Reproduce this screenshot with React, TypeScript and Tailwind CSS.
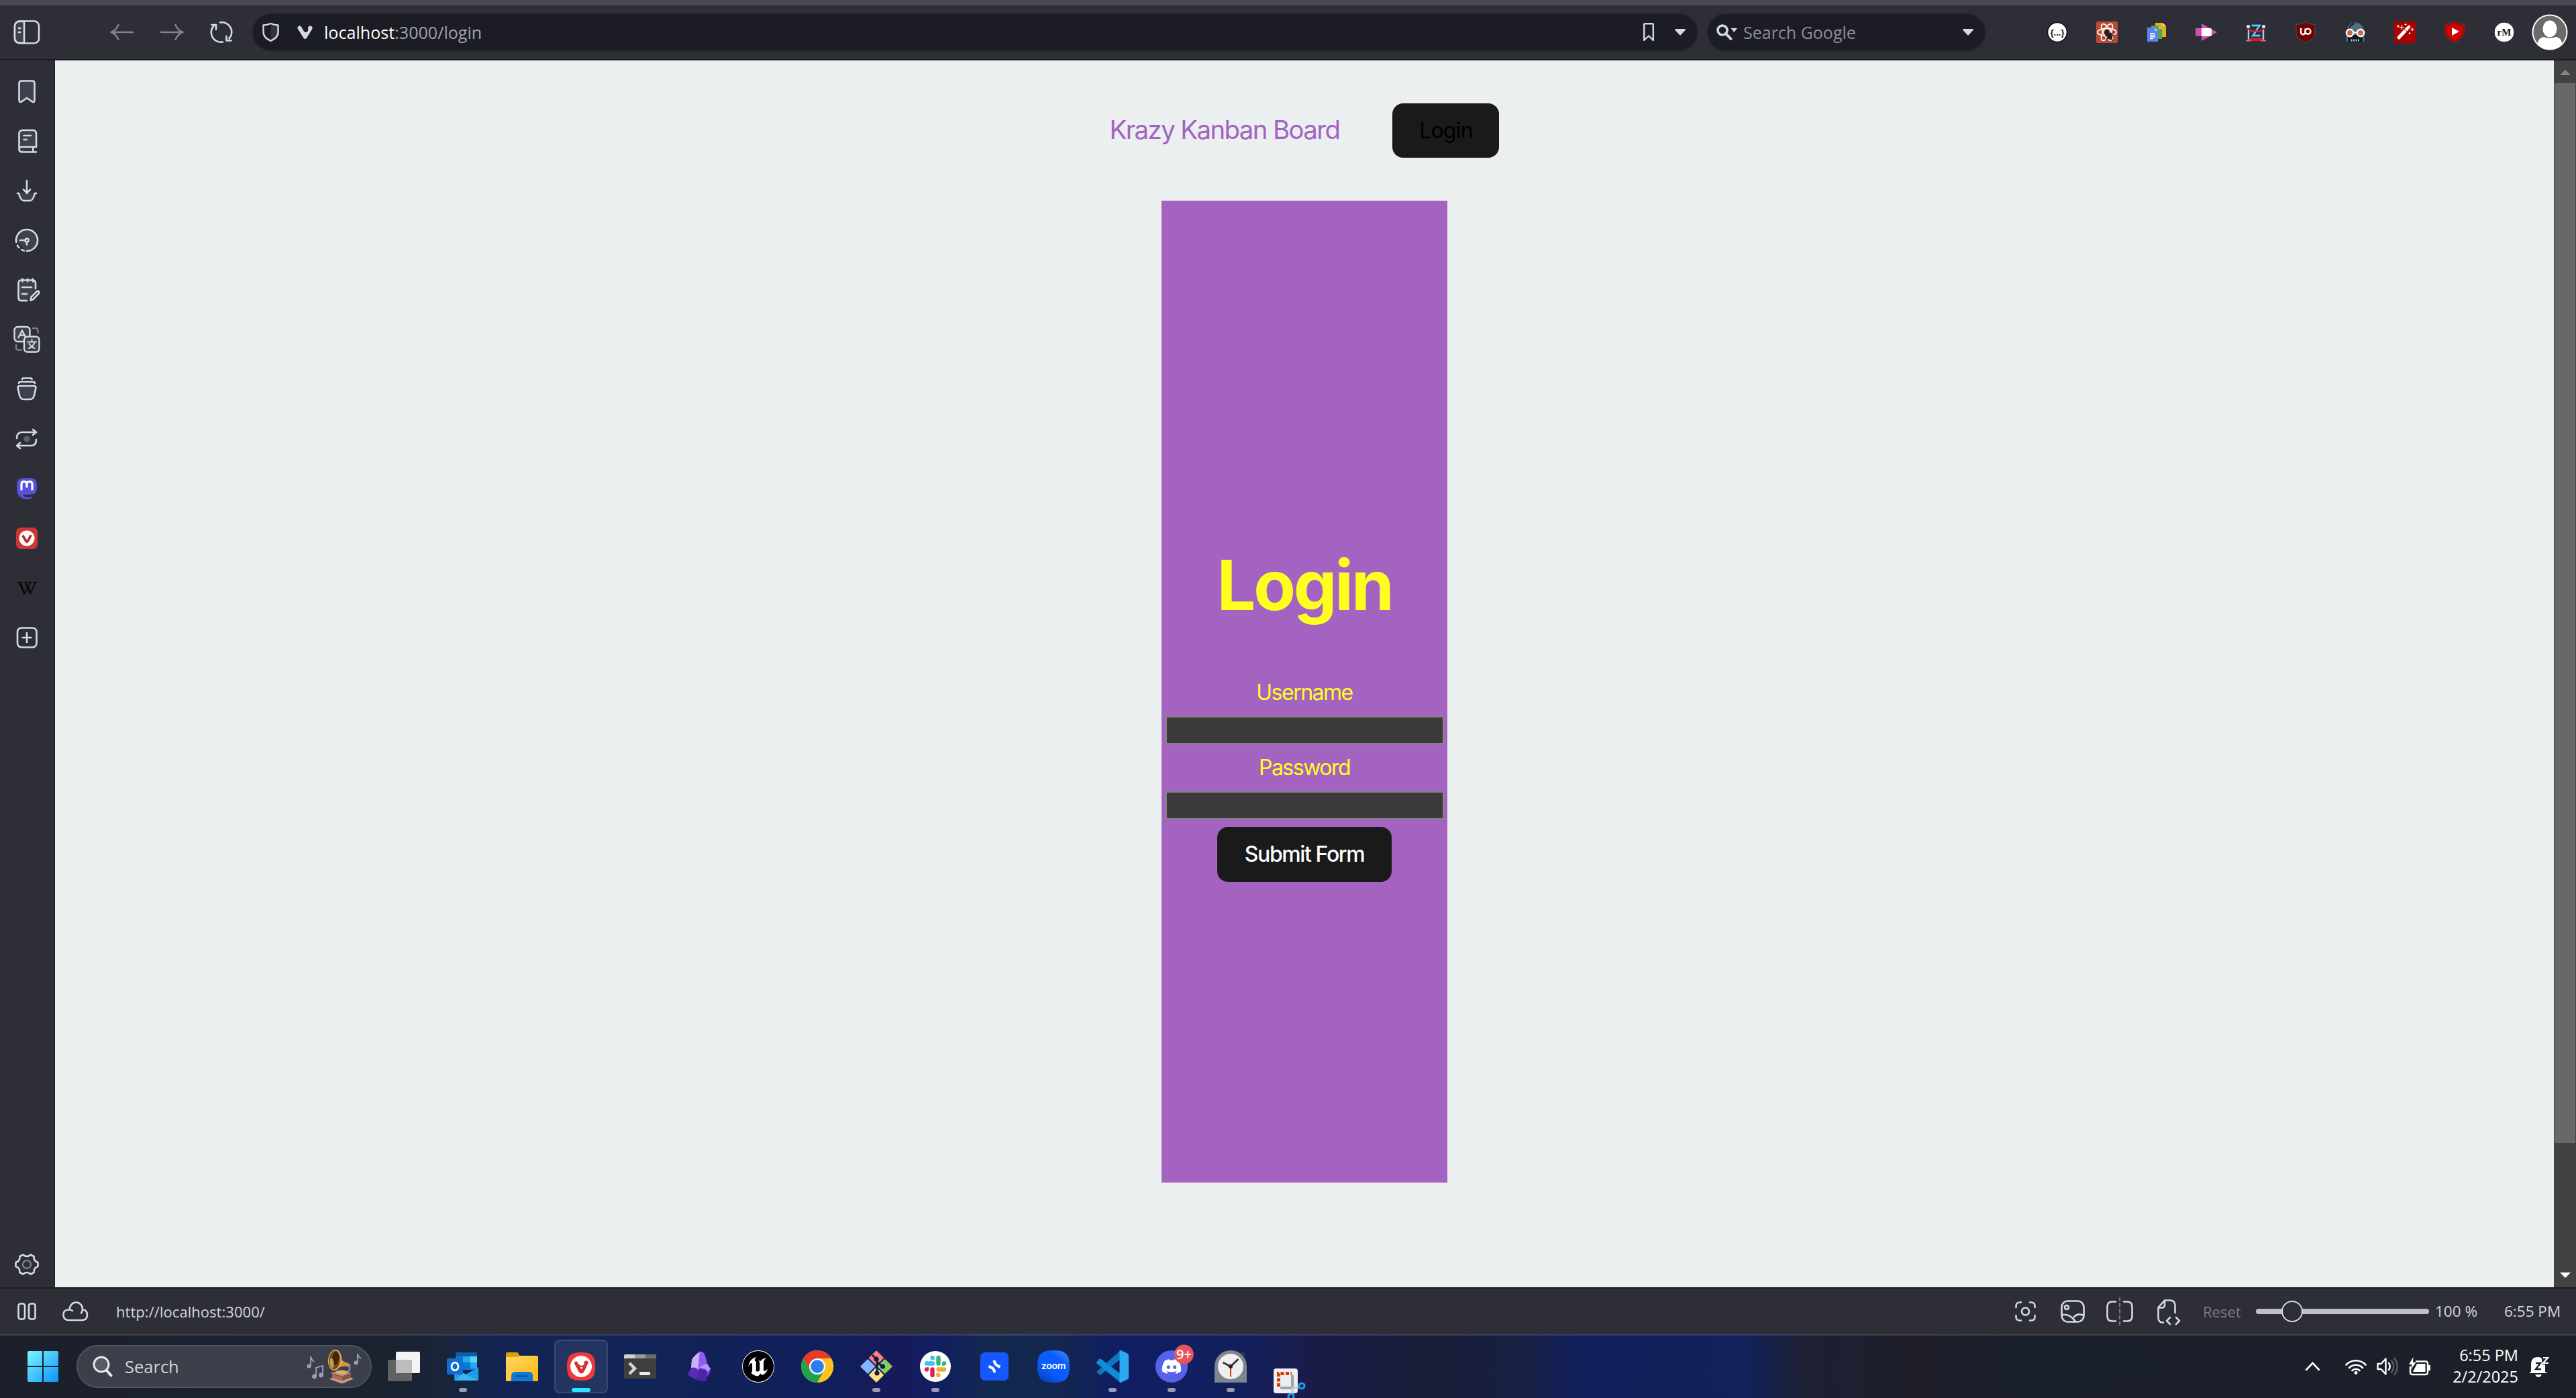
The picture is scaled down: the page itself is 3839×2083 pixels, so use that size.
import type { ReactNode } from "react";
import { FaDiscord, FaWikipediaW } from "react-icons/fa";
import { SiUnrealengine } from "react-icons/si";

const INK = "#d5d9e6";

type IconProps = { w: number; h: number; children: ReactNode; className?: string; stroke?: string; sw?: number };

function Icon({ w, h, children, className = "", stroke = INK, sw = 2.6 }: IconProps) {
  return (
    <svg
      width={w}
      height={h}
      viewBox={`0 0 ${w} ${h}`}
      fill="none"
      stroke={stroke}
      strokeWidth={sw}
      strokeLinecap="round"
      strokeLinejoin="round"
      className={`block shrink-0 overflow-visible ${className}`}
    >
      {children}
    </svg>
  );
}

function VivaldiMark({ w }: { w: number }) {
  return (
    <svg width={w} height={w} viewBox="0 0 48 48" className="block">
      <path d="M24 3C40 3 45 8 45 24S40 45 24 45 3 40 3 24 8 3 24 3Z" fill="#ef3939" />
      <circle cx="24" cy="24" r="16" fill="#fff" />
      <path d="M16.5 19 L23 31 Q24.5 33 26 31 Q29 26 31.5 19" fill="none" stroke="#d83236" strokeWidth="5" strokeLinecap="round" strokeLinejoin="round" />
      <circle cx="31.5" cy="18.5" r="3" fill="#d83236" />
      <path d="M20.5 22 Q24 26 28 22.5" fill="none" stroke="#d83236" strokeWidth="2" />
    </svg>
  );
}

/* ---------- toolbar ---------- */

function Extensions() {
  const items: ReactNode[] = [
    <>
      <circle cx="16" cy="16" r="14.5" fill="#fff" stroke="#111" strokeWidth="1.6" />
      <text x="16" y="20.5" textAnchor="middle" fontSize="13" fontWeight="700" fontFamily="Liberation Sans, sans-serif" fill="#111">{"{...}"}</text>
    </>,
    <>
      <rect width="32" height="32" rx="2" fill="#bb4a35" />
      <g fill="none" stroke="#fff" strokeWidth="1.7">
        <ellipse cx="16" cy="16" rx="14" ry="5.6" />
        <ellipse cx="16" cy="16" rx="14" ry="5.6" transform="rotate(60 16 16)" />
        <ellipse cx="16" cy="16" rx="14" ry="5.6" transform="rotate(120 16 16)" />
      </g>
      <circle cx="16" cy="16" r="3.4" fill="#24201f" />
      <ellipse cx="20" cy="22" rx="4.2" ry="5" fill="#24201f" transform="rotate(-30 20 22)" />
      <path d="M13 21l5 1M15 27l4-3M21 17l3 2M24 20l3 1M23 25l1 4M12 17l4 3" stroke="#24201f" strokeWidth="1.6" />
    </>,
    <>
      <path d="M14 2h11l5 5v16H14z" fill="#e2b219" /><path d="M25 2l5 5h-5z" fill="#f4dc83" />
      <path d="M8 6h11l5 5v15H8z" fill="#56a05a" /><path d="M19 6l5 5h-5z" fill="#a4d0a2" />
      <path d="M2 9h11l5 5v16H2z" fill="#5b82ee" /><path d="M13 9l5 5h-5z" fill="#a9c1fa" />
      <path d="M6 18h8M6 20.500h8M6 23h8M6 25.500h5" stroke="#fff" strokeWidth="1.300" />
    </>,
    <>
      <path d="M0 10h9V3l23 13L9 29v-7H0z" fill="#cb52ac" />
      <path d="M9 10h13a2 2 0 012 2v1.500l-4 2.500 4 2.500V20a2 2 0 01-2 2H9z" fill="#fff" />
      <path d="M19 15l5-4v10l-5-4z" fill="#fff" />
    </>,
    <>
      <path d="M9.500 6h12L11.500 21h11" fill="none" stroke="#14202b" strokeWidth="5.500" />
      <path d="M9.500 6h12L11.500 21h11" fill="none" stroke="#6fb9f5" strokeWidth="3" />
      <path d="M5 27V9M27 27V9" stroke="#9fd4dc" strokeWidth="2.400" />
      <circle cx="4.500" cy="7.500" r="2.500" fill="#e9f1f4" /><circle cx="27.500" cy="7.500" r="2.500" fill="#e9f1f4" />
      <path d="M4 10Q9 17 16 14Q23 17 28 10" fill="none" stroke="#c62c3e" strokeWidth="2.200" />
      <path d="M8 24h16l3 5H5z" fill="#c21f30" /><path d="M1 28.500h8M23 28.500h8" stroke="#e36a72" strokeWidth="2" />
    </>,
    <>
      <path d="M16 .5C13 4 7 4 2 4.500V18c0 6 8 10 14 13.500C22 28 30 24 30 18V4.500C25 4 19 4 16 .5Z" fill="#720000" stroke="#4e4e55" strokeWidth="1" />
      <path d="M9 10v6a3.300 3.300 0 006.600 0v-5.500" fill="none" stroke="#fff" strokeWidth="2.400" />
      <circle cx="19.500" cy="14.800" r="3.900" fill="none" stroke="#fff" strokeWidth="2.400" />
    </>,
    <>
      <path d="M4 13C4 6 9 1.500 16 1.500S28 6 28 13v17h-3l-2-5H9l-2 5H4z" fill="#4f6f80" />
      <path d="M7 12C7 7 11 4 15 3" stroke="#16242e" strokeWidth="2" fill="none" />
      <path d="M5 20h22v10H5z" fill="#0e1a22" />
      <path d="M3.500 22v8M28.500 22v8" stroke="#4f7a8c" strokeWidth="1.600" />
      <circle cx="8" cy="17" r="5.200" fill="#c66a47" stroke="#fff" strokeWidth="2.400" />
      <circle cx="24" cy="17" r="5.200" fill="#c66a47" stroke="#fff" strokeWidth="2.400" />
      <path d="M13 16.500h6" stroke="#fff" strokeWidth="2.200" />
      <path d="M10.500 26.500v3M14 26.500v3M17.500 26.500v3M21 26.500v3" stroke="#b9dbe6" strokeWidth="1.800" />
    </>,
    <>
      <rect width="32" height="32" rx="1.500" fill="#ab0000" />
      <path d="M7 24L18.500 11.500" stroke="#fff" strokeWidth="5" strokeLinecap="round" />
      <path d="M15 11l5 4.500" stroke="#ab0000" strokeWidth="1" /><path d="M20.500 9.500l1.500-1.500" stroke="#fff" strokeWidth="4.500" strokeLinecap="round" />
      <path d="M11.500 5v7M8 8.500h7M6 5v4M4 7h4M17 3v3M15.500 4.500h3M27 9v5M24.500 11.500h5M23 16v3M21.500 17.500h3" stroke="#fff" strokeWidth="1.200" />
    </>,
    <>
      <path d="M16 .8C11 3 5 3 .8 5.500V14c0 8 8 13 15.200 17.200C23 27 31.200 22 31.200 14V5.500C27 3 21 3 16 .8Z" fill="none" stroke="#d80000" strokeWidth="1.300" />
      <path d="M16 3C11.500 5 7 5 3 7v7c0 7 7 11 13 15 6-4 13-8 13-15V7c-4-2-8.500-2-13-4Z" fill="#d80000" />
      <path d="M12 9l11 6-11 6z" fill="#fff" />
    </>,
    <>
      <circle cx="16" cy="16" r="15" fill="#fff" stroke="#1a1a1d" strokeWidth="1" />
      <text x="16" y="21" textAnchor="middle" fontSize="15" fontWeight="700" fontFamily="Liberation Serif, serif" fill="#111">rM</text>
    </>,
  ];
  return (
    <div className="ml-[69px] flex">
      {items.map((it, i) => (
        <div key={i} className="flex w-[74px] justify-center">
          <svg width="32" height="32" viewBox="0 0 32 32" className="block">{it}</svg>
        </div>
      ))}
    </div>
  );
}

function Toolbar() {
  return (
    <header className="flex h-[90px] shrink-0 items-center border-t-8 border-b-2 border-t-[#4a4a52] border-b-[#1c1c25] bg-[#2e2e37] pl-5">
      <Icon w={40} h={36}>
        <rect x="2" y="1.500" width="36" height="33" rx="7" fill="#2e2e37" />
        <path d="M16 2v32H9a7 7 0 01-7-7V9a7 7 0 017-7z" fill="#3f424c" />
        <path d="M8 12h2M8 18h2" />
      </Icon>
      <Icon w={35} h={24} className="ml-[104px]" stroke="#82838f" sw={2.4}>
        <path d="M34 12H1.500M12.500 1C10 7 6 10.500 1.500 12 6 13.500 10 17 12.500 23" />
      </Icon>
      <Icon w={35} h={24} className="ml-10" stroke="#82838f" sw={2.4}>
        <path d="M1 12H33.500M22.500 1C25 7 29 10.500 33.500 12 29 13.500 25 17 22.500 23" />
      </Icon>
      <Icon w={32} h={32} className="ml-10">
        <path d="M14 1.500A14.500 14.500 0 0127.500 25.500M18 30.500A14.500 14.500 0 014.500 6.500" />
        <path d="M1.500 5H8v7M30.500 28.500H23.500V22" />
      </Icon>
      <div className="ml-[29px] flex h-[58px] w-[2156px] items-center rounded-[29px] border-2 border-[#282831] bg-[#1c1c25] pl-[14px] pr-[17px]">
        <Icon w={25} h={28} sw={2.4}>
          <path d="M12.500 1v26c7.500-4 11-7 11-14V3.500Z" fill="#33333c" stroke="none" />
          <path d="M1.500 3.500C6 3.500 9 2.500 12.500 1c3.500 1.500 6.500 2.500 11 2.500V13c0 7-3.500 10-11 14C5 23 1.500 20 1.500 13Z" />
        </Icon>
        <svg width="23" height="20" viewBox="0 0 23 20" className="ml-[27px] block" fill={INK}>
          <path d="M.6 4.500A3 3 0 016 2l3.500 6q2 3.300 5 1.500 2.300-1.600 1.700-4.500A3.300 3.300 0 1122.500 4.800L14 18.500q-2.300 3-4.700 0z" />
        </svg>
        <div className="ml-[17px] font-['Open_Sans',sans-serif] text-[25px] leading-[36px] tracking-[0.05px] text-[#a2a3ae]">
          <span className="text-white">localhost</span>:3000/login
        </div>
        <Icon w={16} h={28} className="ml-auto" sw={2.4}>
          <path d="M1.200 2.500Q1.200 1.200 2.500 1.200h11Q14.800 1.200 14.800 2.500V26L8 19.500 1.200 26z" />
        </Icon>
        <svg width="16" height="10" viewBox="0 0 16 10" className="ml-[31px] block" fill={INK}><path d="M1 0h14q1.500 1 .5 2L8 10 .5 2Q-.5 1 1 0z" /></svg>
      </div>
      <div className="ml-3 flex h-[58px] w-[417px] items-center rounded-[29px] border-2 border-[#282831] bg-[#1c1c25] pl-[13px] pr-[17px]">
        <svg width="31" height="24" viewBox="0 0 31 24" className="block" fill="none">
          <circle cx="9" cy="9" r="7" stroke={INK} strokeWidth="3.600" />
          <path d="M14 14l7.500 8" stroke={INK} strokeWidth="4" strokeLinecap="round" />
          <path d="M21.500 6H31l-4.700 6z" fill={INK} />
        </svg>
        <div className="ml-[9px] font-['Open_Sans',sans-serif] text-[25px] leading-[36px] text-[#8e8f9a]">Search Google</div>
        <svg width="16" height="10" viewBox="0 0 16 10" className="ml-auto block" fill={INK}><path d="M1 0h14q1.500 1 .5 2L8 10 .5 2Q-.5 1 1 0z" /></svg>
      </div>
      <Extensions />
      <svg width="54" height="54" viewBox="0 0 54 54" className="ml-1 block">
        <defs><clipPath id="avatar"><circle cx="27" cy="27" r="26" /></clipPath></defs>
        <circle cx="27" cy="27" r="25.500" fill="#6b6b6b" />
        <g clipPath="url(#avatar)" fill="#fff"><ellipse cx="27" cy="22" rx="10.500" ry="12.500" /><path d="M9 54V42q2-7 9-8 9 4 18 0 7 1 9 8v12z" /></g>
        <circle cx="27" cy="27" r="25.500" fill="none" stroke="#fff" strokeWidth="2" />
      </svg>
    </header>
  );
}

/* ---------- left panel ---------- */

const PANEL_ICONS: ReactNode[] = [
  <Icon w={40} h={40}><path d="M8.500 8Q8.500 4.500 12 4.500H28Q31.500 4.500 31.500 8V33Q31.500 37.500 28 35.500L20 30 12 35.500Q8.500 37.500 8.500 33Z" fill="#3f424c" /></Icon>,
  <Icon w={40} h={40}><path d="M8.500 31V9.500Q8.500 4 14 4H29Q34 4 34 9.500V29H12.500Q8.500 29 8.500 32.500T12.500 36.500H34M30.500 29q-3 4 0 7.500" fill="#3f424c" /><path d="M15.500 12H26M15.500 18H20" /></Icon>,
  <Icon w={40} h={40}><path d="M7 24h26l-3 8q-1 3-4 3H14q-3 0-4-3z" fill="#3f424c" stroke="none" /><path d="M6 24h2q3 11 7 11h10q4 0 7-11h2M20 5v19M15 18.500l5 5 5-5" /></Icon>,
  <Icon w={40} h={40}><path d="M4 20a16 16 0 1116 16" fill="#3f424c" /><path d="M16 35.500A16 16 0 014 20" strokeDasharray="4 5" /><path d="M10 20h8M20 24v2.500" /><circle cx="20" cy="20" r="2.500" /></Icon>,
  <Icon w={40} h={40}><path d="M20 36H12Q7.500 36 7.500 31V10Q7.500 5.500 12 5.500H28Q33 5.500 33 10V18" fill="#3f424c" /><path d="M13.500 3.500v4M21 3.500v4M29 3.500v4M13 16H27M13 26h7" /><path d="M25.500 35.500l1-5 8.500-8.500q2-1 3 .5t-.5 3l-8 8.500z" fill="#2e2e37" /></Icon>,
  <Icon w={40} h={40} sw={2.4}><path d="M29 3h4q3.500 0 3.500 4v3M4 28v4q0 3.500 4 3.500h4" stroke="#777985" /><rect x="1.500" y="1" width="23" height="22" rx="5" fill="#3f424c" /><path d="M7.500 17L13 6.500 18.500 17M9.500 13.500h7" /><rect x="16" y="15.500" width="22.500" height="23" rx="5" fill="#3f424c" /><path d="M21 23.500H34M27.500 20v3.500M23 33q7-3 8.500-9M23.500 26q3 5 8 7" strokeWidth="2" /></Icon>,
  <Icon w={40} h={40}><path d="M13 5q0-1.500 2-1.500H25.500q2 0 2 1.500M8 11q0-2 3-2H29q3 0 3 2" /><path d="M6.500 17.500q0-2.500 3-2.500h21q3 0 3 2.500L31 29q-1.500 6-6 6H15q-4.500 0-6-6z" fill="#3f424c" /></Icon>,
  <Icon w={40} h={40}><path d="M5 19q0-9 8-9H33M29 6l5 4-5 4M34 21q0 9-8 9H5M10 26l-5 4 5 4" /><circle cx="20" cy="20" r="4.500" fill="#5d606c" stroke="none" /></Icon>,
  <svg width="30" height="32" viewBox="0 0 30 32" className="block">
    <path d="M7 .8Q15-.6 23 .8q6.500 1.200 6.800 7.500.4 6-.6 11-1 4.500-6.200 5.300-7 1.200-13.500.2 0 3.500 5 4 4 .4 7.500-.7v2.500q-5 1.800-10.500.8Q1.500 29.500.5 19-.3 12 .3 7.500 1.200 2 7 .8z" fill="#5a50e0" />
    <path d="M7 18.500V9.500q0-3.800 4-3.800t4 4.300v4.500-4.500q0-4.300 4-4.300t4 3.800v9" fill="none" stroke="#fff" strokeWidth="3.200" />
  </svg>,
  <div className="size-8 overflow-hidden rounded-[7px] bg-[#cf3535]"><svg width="32" height="32" viewBox="0 0 32 32"><circle cx="16" cy="16" r="11.500" fill="#fff" /><path d="M10.500 13l4.500 7.500q1 1.500 2 0Q20 16 21.500 12.500" fill="none" stroke="#b92b2f" strokeWidth="3.600" strokeLinecap="round" /></svg></div>,
  <FaWikipediaW size={29} color="#08080a" stroke="#08080a" strokeWidth={12} />,
  <Icon w={40} h={40}><rect x="6" y="5.500" width="28.500" height="29" rx="6" fill="#2b2e37" /><path d="M20 13v14M13.500 20h13" /></Icon>,
];

function Panel() {
  return (
    <aside className="flex w-[82px] shrink-0 flex-col border-r-2 border-[#24242d] bg-[#2e2e37] pt-[9px]">
      {PANEL_ICONS.map((ic, i) => (
        <div key={i} className="flex h-[74px] w-20 items-center justify-center">{ic}</div>
      ))}
      <div className="mt-auto flex h-[68px] w-20 items-center justify-center">
        <Icon w={36} h={32}>
          <path d="M12.500 1.500Q15 4 18 4T23.500 1.500L28.500 4Q28 11 34.500 13V19Q28 21 28.500 28L23.500 30.500Q21 28 18 28T12.500 30.500L7.500 28Q8 21 1.500 19V13Q8 11 7.500 4Z" />
          <circle cx="18" cy="16" r="6" stroke="#777985" />
        </Icon>
      </div>
    </aside>
  );
}

/* ---------- web page ---------- */

function Field({ label, className }: { label: string; className: string }) {
  return (
    <>
      <label className={`h-12 text-[32px] leading-[48px] tracking-[-1.5px] text-[#ffff1f] ${className}`}>{label}</label>
      <input className="mt-[11px] block h-[42px] w-[415px] rounded-[3px] border-2 border-[#858585] bg-[#3b3b3b]" />
    </>
  );
}

function Page() {
  return (
    <main className="flex grow flex-col items-center bg-[#ebeff0] pt-16 font-[Inter,sans-serif]">
      <nav className="flex items-center gap-[79px]">
        <h2 className="pb-[3px] text-[38.4px] leading-[48px] tracking-[-1.6px] text-[#a463c1]">Krazy Kanban Board</h2>
        <button className="h-[81px] w-[159px] rounded-2xl bg-[#1a1a1a] text-[32px] tracking-[-0.8px] text-black">Login</button>
      </nav>
      <form className="mt-16 flex h-[1463px] w-[426px] flex-col items-center bg-[#a463c1] pt-[517px]">
        <h1 className="h-[113px] text-[102.4px] leading-[113px] font-bold tracking-[-3.200px] text-[#ffff1f]">Login</h1>
        <Field label="Username" className="mt-[79px]" />
        <Field label="Password" className="mt-[11px]" />
        <button className="mt-[11px] h-[82px] w-[260px] rounded-2xl bg-[#1a1a1a] text-[32px] font-medium tracking-[-1.4px] text-white">Submit Form</button>
      </form>
    </main>
  );
}

function Scrollbar() {
  return (
    <div className="flex w-[33px] shrink-0 flex-col items-center bg-[#424242]">
      <svg width="16" height="8" viewBox="0 0 16 8" className="mt-[14px] block" fill="#868686"><path d="M8 0l8 8H0z" /></svg>
      <div className="mt-3 h-[1579px] w-[31px] bg-[#686868]" />
      <svg width="16" height="8" viewBox="0 0 16 8" className="mt-auto mb-[14px] block" fill="#fff"><path d="M0 0h16L8 8z" /></svg>
    </div>
  );
}

/* ---------- status bar ---------- */

function StatusBar() {
  return (
    <footer className="flex h-[70px] shrink-0 items-center border-t-2 border-[#1c1c25] bg-[#2e2e37] pl-[26px] font-['Open_Sans',sans-serif] text-[22px] leading-[32px] text-[#d2d5e2]">
      <Icon w={28} h={26}>
        <rect x="1.500" y="1.500" width="9.500" height="23" rx="3" /><rect x="17" y="1.500" width="9.500" height="23" rx="3" />
      </Icon>
      <Icon w={38} h={30} className="ml-[39px]">
        <path d="M10.500 12.500C11 6 15 1.500 20.500 1.500S30 6 30 12c5 1 7 4 7 8q0 8-8 8H9.500Q1.500 28 1.500 20t9-7.500q2.500 0 4.500 1.500M30 12q0 3-2 5.500" />
      </Icon>
      <div className="ml-[42px] tracking-[0.05px]">http://localhost:3000/</div>
      <div className="ml-auto flex items-center">
        <Icon w={31} h={30}>
          <path d="M1.500 9V7Q1.500 1.500 7 1.500H9M22 1.500h2q5.500 0 5.500 5.500V9M29.500 21v2q0 5.500-5.500 5.500H22M9 28.500H7Q1.500 28.500 1.500 23V21" /><circle cx="15.500" cy="15" r="5.500" />
        </Icon>
        <Icon w={36} h={34} className="ml-[37px]">
          <rect x="1.500" y="1.500" width="33" height="31" rx="9" /><circle cx="9" cy="11" r="3" /><path d="M2 22q12-2 20 10M20 25q6-6 14-2" />
        </Icon>
        <Icon w={40} h={42} className="ml-8">
          <path d="M14 6.500H9Q1.500 6.500 1.500 14V28Q1.500 35.500 9 35.500h5M26 6.500h5Q38.500 6.500 38.500 14V28Q38.500 35.500 31 35.500H26" /><path d="M20 1v4M20 9v5M20 18v5M20 27v5M20 37v4" stroke="#777985" strokeWidth="2.200" />
        </Icon>
        <Icon w={34} h={37} className="ml-9">
          <path d="M9 34.500H8Q1.500 34.500 1.500 27V12L11 1.500h8q7.500 0 7.500 8V20M1.500 12.500H7Q11 12.500 11 8V1.500M19 27l-5 5 5 5M28 27l5 5-5 5" />
        </Icon>
        <div className="ml-[34px] w-[79px] text-[#797a85]">Reset</div>
        <div className="relative flex h-8 w-[258px] items-center">
          <div className="h-2 w-full rounded-full bg-[#bfc0cf]" />
          <div className="absolute left-[38px] size-8 rounded-full border-2 border-[#d5d9e6] bg-[#2e2e37]" />
        </div>
        <div className="ml-[9px] w-[103px] text-[22.5px]">100 %</div>
        <div className="w-[107px] text-[22.5px]">6:55 PM</div>
      </div>
    </footer>
  );
}

/* ---------- taskbar ---------- */

type App = { art: ReactNode; dot?: boolean; active?: boolean };

const APPS: App[] = [
  {
    art: (
      <>
        <rect x="0" y="14" width="36" height="32" rx="2" fill="#626262" />
        <rect x="12" y="2" width="36" height="32" rx="2" fill="#f4f4f4" />
        <path d="M12 14h24v20H14a2 2 0 01-2-2z" fill="#bdbdbd" />
      </>
    ),
  },
  {
    dot: true,
    art: (
      <>
        <path d="M13 5a2 2 0 012-2h28a2 2 0 012 2v24H13z" fill="#0f78d4" />
        <path d="M13 5a2 2 0 012-2h28a2 2 0 012 2v4H13z" fill="#0a5ea8" />
        <path d="M24 9h11v9H24z" fill="#28a8ea" /><path d="M35 9h10v9H35z" fill="#50d9ff" /><path d="M24 18h11v9H24z" fill="#0078d4" /><path d="M35 18h10v9H35z" fill="#28a8ea" />
        <path d="M47 25L28 36l-17-8v15a2 2 0 002 2h32a2 2 0 002-2z" fill="#1f9be8" /><path d="M11 45l14-11 22 11z" fill="#35b5f2" />
        <rect x="0" y="12" width="24" height="24" rx="2" fill="#0f6fd0" />
        <ellipse cx="12" cy="24" rx="5" ry="5.800" fill="none" stroke="#fff" strokeWidth="2.800" />
      </>
    ),
  },
  {
    art: (
      <>
        <path d="M0 5a2 2 0 012-2h14q2 0 3 2l2 5H0z" fill="#e0a003" />
        <path d="M0 10h17l3-2h26a2 2 0 012 2v36H0z" fill="url(#folder)" />
        <path d="M8 46V38q0-6 6-6h20q6 0 6 6v8z" fill="#1179cf" /><path d="M15 38.500h18" stroke="#0b4f92" strokeWidth="2" />
      </>
    ),
  },
  { active: true, art: <VivaldiMark w={48} /> },
  {
    art: (
      <>
        <rect x="0" y="6" width="48" height="36" rx="2" fill="#3f3f3f" />
        <path d="M0 12V8a2 2 0 012-2h14v6z" fill="#d0d0d0" /><path d="M16 6h16v6H16z" fill="#9a9a9a" /><path d="M32 6h14a2 2 0 012 2v4H32z" fill="#6c6c6c" />
        <path d="M8 19l8 8-8 8" fill="none" stroke="#d5d5d5" strokeWidth="4.500" /><rect x="23" y="32" width="16" height="5" rx="1" fill="#e9e9e9" />
      </>
    ),
  },
  {
    art: (
      <>
        <path d="M25 2q-9 6-12 12l-1 12-5 10q10 8 25 10 3-1 3-5l6-10-5-8q-1-10-4-17-3-5-7-4z" fill="#7a3ff2" />
        <path d="M25 2q-9 6-12 12l-1 12q8-2 11 4 0-14 2-28z" fill="#c9b2f5" />
        <path d="M25 2q-2 12-1 24l12 3 5-2-5-6q-1-8-4-15-3-5-7-4z" fill="#8f5bf0" />
        <path d="M24 26q12 0 12 6l5-4-5-8q-8 2-12 6z" fill="#b497f6" />
        <path d="M12 26l-5 10q6 5 12 7 2-6 4-13-4-5-11-4z" fill="#5a2bb8" />
        <path d="M19 43q3-8 5-15 8 0 12 4l-1 9q0 4-3 5-7-1-13-3z" fill="#4b23a6" />
      </>
    ),
  },
  {
    art: (
      <>
        <circle cx="24" cy="24" r="23.200" fill="#000" stroke="#fff" strokeWidth="1.400" />
        <SiUnrealengine size={47} x={0.5} y={0.5} color="#fff" />
        <circle cx="24" cy="24" r="21.800" fill="none" stroke="#000" strokeWidth="2.400" />
      </>
    ),
  },
  {
    art: (
      <>
        <circle cx="24" cy="24" r="24" fill="#fbbc0c" />
        <path d="M3.200 12A24 24 0 0144.800 12H24L13.600 30Z" fill="#e63c30" />
        <path d="M3.200 12A24 24 0 0024 48L34.400 30H13.600Z" fill="#22a04a" />
        <path d="M24 12h20.800A24 24 0 0124 48l10.400-18z" fill="#fcc31e" />
        <circle cx="24" cy="24" r="12" fill="#fff" /><circle cx="24" cy="24" r="9.800" fill="#2c7df0" />
      </>
    ),
  },
  {
    dot: true,
    art: (
      <>
        <g transform="rotate(45 24 24)">
          <rect x="7" y="7" width="16" height="16" rx="1" fill="#ff7f7f" /><rect x="25" y="7" width="16" height="16" rx="1" fill="#84d160" />
          <rect x="7" y="25" width="16" height="16" rx="1" fill="#82b4ff" /><rect x="25" y="25" width="16" height="16" rx="1" fill="#ffe07a" />
        </g>
        <path d="M18 7l7 7v20M24 16l9 8" fill="none" stroke="#111b50" strokeWidth="3" />
        <circle cx="24" cy="13" r="3.600" fill="#111b50" /><circle cx="33.500" cy="24" r="3.600" fill="#111b50" /><circle cx="25" cy="34" r="3.600" fill="#111b50" />
      </>
    ),
  },
  {
    dot: true,
    art: (
      <>
        <circle cx="24" cy="24" r="23" fill="#fff" />
        <g fill="none" strokeLinecap="round" strokeWidth="6.400">
          <path d="M11 19.500h9" stroke="#36c5f0" /><path d="M28.500 11v8.500" stroke="#2eb67d" /><path d="M28.500 28.500H37" stroke="#ecb22e" /><path d="M19.500 28.500V37" stroke="#e01e5a" />
        </g>
        <path d="M22.700 14.200h-3.200a3.200 3.200 0 113.200-3.200z" fill="#36c5f0" /><path d="M33.800 22.700v-3.200a3.200 3.200 0 113.200 3.200z" fill="#2eb67d" />
        <path d="M25.300 33.800h3.200a3.200 3.200 0 11-3.200 3.200z" fill="#ecb22e" /><path d="M14.200 25.300v3.200a3.200 3.200 0 11-3.200-3.200z" fill="#e01e5a" />
      </>
    ),
  },
  {
    art: (
      <>
        <rect x="3" y="3" width="42" height="42" rx="7" fill="#1558ff" />
        <path d="M23.500 15q1 7.500 9 9.500M15.500 24q7.500 1.500 9 9" fill="none" stroke="#fff" strokeWidth="4" />
      </>
    ),
  },
  {
    art: (
      <>
        <path d="M24 0C42 0 48 6 48 24S42 48 24 48 0 42 0 24 6 0 24 0Z" fill="url(#zoom)" />
        <text x="24" y="28" textAnchor="middle" fontSize="14" fontWeight="600" letterSpacing="-.2" fontFamily="Inter, sans-serif" fill="#fff">zoom</text>
      </>
    ),
  },
  {
    dot: true,
    art: (
      <>
        <path d="M0 32l4 4q1.500 1 3 0L36 13V0z" fill="#0d78bd" />
        <path d="M0 17.500l4-4.500q1.500-1 3 0L36 35v13L.5 19.500q-1-1 0-2z" fill="#0d8fd8" />
        <path d="M34.500 48V0q1-.5 2 0L46 4.500q2 1 2 3v33q0 2-2 3L36.500 48q-1 .5-2 0z" fill="#28a9f1" />
      </>
    ),
  },
  {
    dot: true,
    art: (
      <>
        <circle cx="24" cy="24" r="24" fill="#5562ea" />
        <FaDiscord size={31} x={8.5} y={8.500} color="#fff" />
        <circle cx="42.400" cy="6" r="14.500" fill="#e9545a" />
        <text x="42.400" y="12.500" textAnchor="middle" fontSize="20" fontWeight="600" fontFamily="Open Sans, sans-serif" fill="#fff">9+</text>
      </>
    ),
  },
  {
    dot: true,
    art: (
      <>
        <path d="M38 5l5-4 3 5-4 4z" fill="#3a3a3a" />
        <path d="M0 48V24a24 24 0 0148 0v24z" fill="#7d868c" />
        <circle cx="24" cy="24" r="19" fill="#efefef" />
        <path d="M24 24L12.500 18M24 24L35.500 13" stroke="#3a3a3a" strokeWidth="3" /><path d="M24 24v15.500" stroke="#d83b01" strokeWidth="2" /><circle cx="24" cy="24" r="3" fill="#222" />
      </>
    ),
  },
  {
    art: (
      <>
        <rect x="0" y="27" width="36" height="37" rx="4" fill="#eceef0" />
        <path d="M7.500 54V34.500H27" fill="none" stroke="#d83b01" strokeWidth="5" strokeDasharray="5 2.500" />
        <path d="M28 37v18M10 56h20" stroke="#9aa4ab" strokeWidth="4" fill="none" />
        <path d="M28 55v10M28 55.500h9" stroke="#c5ccd1" strokeWidth="3" />
        <circle cx="42" cy="53" r="4" fill="none" stroke="#1e9fe8" strokeWidth="3" /><circle cx="26" cy="69" r="4" fill="none" stroke="#1e9fe8" strokeWidth="3" />
      </>
    ),
  },
];

function TaskbarSearch() {
  return (
    <div className="ml-[27px] flex h-16 w-[440px] items-center rounded-full border-2 border-[#4e525c] bg-[#3a3f4a] pl-[22px] pr-[11px]">
      <svg width="30" height="32" viewBox="0 0 30 32" fill="none" stroke="#e8e9eb" strokeLinecap="round" className="block">
        <circle cx="13" cy="13" r="11" strokeWidth="3" fill="#555b66" /><path d="M21 22l6.500 7.500" strokeWidth="4" />
      </svg>
      <div className="ml-[18px] font-['Open_Sans',sans-serif] text-[25.5px] leading-9 text-[#d3d4d7]">Search</div>
      <svg width="86" height="52" viewBox="0 0 86 52" className="ml-auto block">
        <g fill="#9aa0bb" stroke="#9aa0bb" strokeWidth="1.800">
          <path d="M8 25V11q1 5 5 8" fill="none" /><circle cx="5.500" cy="25.500" r="2.200" />
          <path d="M16 41V28l10-3v14" fill="none" /><circle cx="13.500" cy="41" r="2.500" /><circle cx="23.500" cy="39" r="2.500" />
          <path d="M78 20V7q1 5 5 7" fill="none" /><circle cx="75.500" cy="20.500" r="2.200" />
        </g>
        <path d="M66 22v8q-1 4-4 4" fill="none" stroke="#8f8693" strokeWidth="2.600" />
        <path d="M49 10q5 9 16 11.500v5Q54 24 46 30z" fill="#cf9a48" />
        <ellipse cx="44" cy="16.500" rx="10" ry="15.500" fill="#e0b15c" transform="rotate(6 44 16.500)" />
        <ellipse cx="43.500" cy="16.500" rx="8.500" ry="14" fill="#7a4c12" transform="rotate(6 43.500 16.500)" />
        <ellipse cx="45" cy="14" rx="5" ry="10" fill="#3f2505" transform="rotate(6 45 14)" />
        <ellipse cx="39.500" cy="21" rx="3" ry="7.500" fill="#c39a5c" transform="rotate(-6 39.500 21)" />
        <path d="M37 36l14-4 18 4-14 5z" fill="#b98578" /><ellipse cx="54" cy="34.500" rx="9" ry="3" fill="#d8b263" />
        <path d="M40 37.500l15 4v6l-15-4z" fill="#a86a5a" /><path d="M55 41.500l13-5v6l-13 5z" fill="#8b5246" />
        <path d="M36 45l4-2 15 4.500 13-5 4 2-17 7z" fill="#cf9a8d" />
      </svg>
    </div>
  );
}

function Tray() {
  return (
    <div className="ml-auto flex items-center">
      <svg width="23" height="14" viewBox="0 0 23 14" fill="none" stroke="#fff" strokeWidth="2.600" className="block"><path d="M1.500 12.500l10-10.500 10 10.500" /></svg>
      <svg width="32" height="24" viewBox="0 0 32 24" fill="none" stroke="#fff" strokeWidth="2.600" strokeLinecap="round" className="ml-[37px] block">
        <path d="M1.500 9.500a20 20 0 0129 0M6 14a14 14 0 0120 0M10.500 18a8 8 0 0111 0" /><circle cx="16" cy="21.500" r="2.400" fill="#fff" stroke="none" />
      </svg>
      <svg width="34" height="28" viewBox="0 0 34 28" fill="none" stroke="#fff" strokeWidth="2.400" strokeLinejoin="round" strokeLinecap="round" className="ml-[15px] block">
        <path d="M1.500 10h5l7-7.500v23L6.500 18h-5zM18 9q3.500 5 0 10" /><path d="M22 5q6.500 9 0 18M26.500 2q8.500 12 0 24" stroke="#565b66" />
      </svg>
      <svg width="33" height="28" viewBox="0 0 33 28" fill="none" stroke="#fff" strokeWidth="2.400" className="ml-[14px] block">
        <path d="M10 6.500H25a3 3 0 013 3V23a3 3 0 01-3 3H5a3 3 0 01-3-3V14" /><path d="M29 12v8h3v-8z" fill="#fff" stroke="none" /><path d="M12 10h12.500v12H6z" fill="#fff" stroke="none" /><path d="M6.500 0L0 11h4.500L2.500 19 10.500 8H6z" fill="#fff" stroke="none" />
      </svg>
      <div className="ml-[27px] w-[103px] pb-[2px] text-right font-['Open_Sans',sans-serif] text-[23.500px] leading-8 text-white">
        <div>6:55 PM</div>
        <div>2/2/2025</div>
      </div>
      <svg width="30" height="32" viewBox="0 0 30 32" className="mr-[39px] ml-[17px] block">
        <path d="M2 24V13Q2 2 12 2T23 13v11h2v2H0v-2zM8 28h10q-2 4-5 4t-5-4z" fill="#fff" />
        <path d="M9 11h7L9 20h8" fill="none" stroke="#1b202b" strokeWidth="2.400" />
        <path d="M17 -1h13v14H19z" fill="#1b202b" /><path d="M20 3h7l-7 8h8" fill="none" stroke="#fff" strokeWidth="2.200" />
      </svg>
    </div>
  );
}

function Taskbar() {
  return (
    <div className="flex h-[95px] shrink-0 items-center overflow-hidden border-t-2 border-white/15 bg-[linear-gradient(90deg,#1b202b_0px,#1b2230_580px,#19243a_660px,#132453_740px,#122355_940px,#101f5c_1240px,#171a58_1340px,#101e60_1400px,#13284e_1470px,#12264f_1590px,#101e62_1660px,#121f5e_1850px,#1b1b48_1960px,#191e38_2130px,#181f42_2270px,#101f5a_2350px,#11225a_2600px,#1d1f33_2690px,#1f1f2a_2860px,#1a202c_3000px,#1b1f28_3839px)] bg-origin-border pb-px pl-[41px]">
      <svg width="46" height="46" viewBox="0 0 46 46" className="block" fill="url(#win)">
        <path d="M2 0H22V22H0V2Q0 0 2 0zM24 0H44Q46 0 46 2V22H24zM0 24H22V46H2Q0 46 0 44zM24 24H46V44Q46 46 44 46H24z" />
        <defs>
          <linearGradient id="win" x1="0" y1="0" x2="1" y2="1"><stop stopColor="#7df5ff" /><stop offset="1" stopColor="#0a93fb" /></linearGradient>
          <linearGradient id="folder" x1="0" y1="0" x2="1" y2="1"><stop stopColor="#ffd765" /><stop offset="1" stopColor="#fcb80f" /></linearGradient>
          <linearGradient id="zoom" x1="1" y1="0" x2="0.3" y2="1"><stop stopColor="#4d90ff" /><stop offset="0.35" stopColor="#0b5cff" /><stop offset="0.7" stopColor="#0b5cff" /><stop offset="1" stopColor="#0545c8" /></linearGradient>
        </defs>
      </svg>
      <TaskbarSearch />
      <div className="ml-1 flex">
        {APPS.map((app, i) => (
          <div key={i} className="flex w-[88px] justify-center">
            <div className={`relative flex size-20 items-center justify-center rounded-lg ${app.active ? "border-2 border-white/10 bg-white/8" : ""}`}>
              <svg width="48" height="48" viewBox="0 0 48 48" className="block overflow-visible">{app.art}</svg>
              {app.dot && <div className="absolute bottom-0.5 left-[34px] h-1.5 w-3 rounded-full bg-[#9a9bb5]" />}
              {app.active && <div className="absolute bottom-0 left-[24px] h-1.5 w-7 rounded-full bg-[#2fe4ff]" />}
            </div>
          </div>
        ))}
      </div>
      <Tray />
    </div>
  );
}

export default function App() {
  return (
    <div className="flex h-[2083px] w-[3839px] flex-col overflow-hidden">
      <Toolbar />
      <div className="flex min-h-0 grow">
        <Panel />
        <Page />
        <Scrollbar />
      </div>
      <StatusBar />
      <Taskbar />
    </div>
  );
}
